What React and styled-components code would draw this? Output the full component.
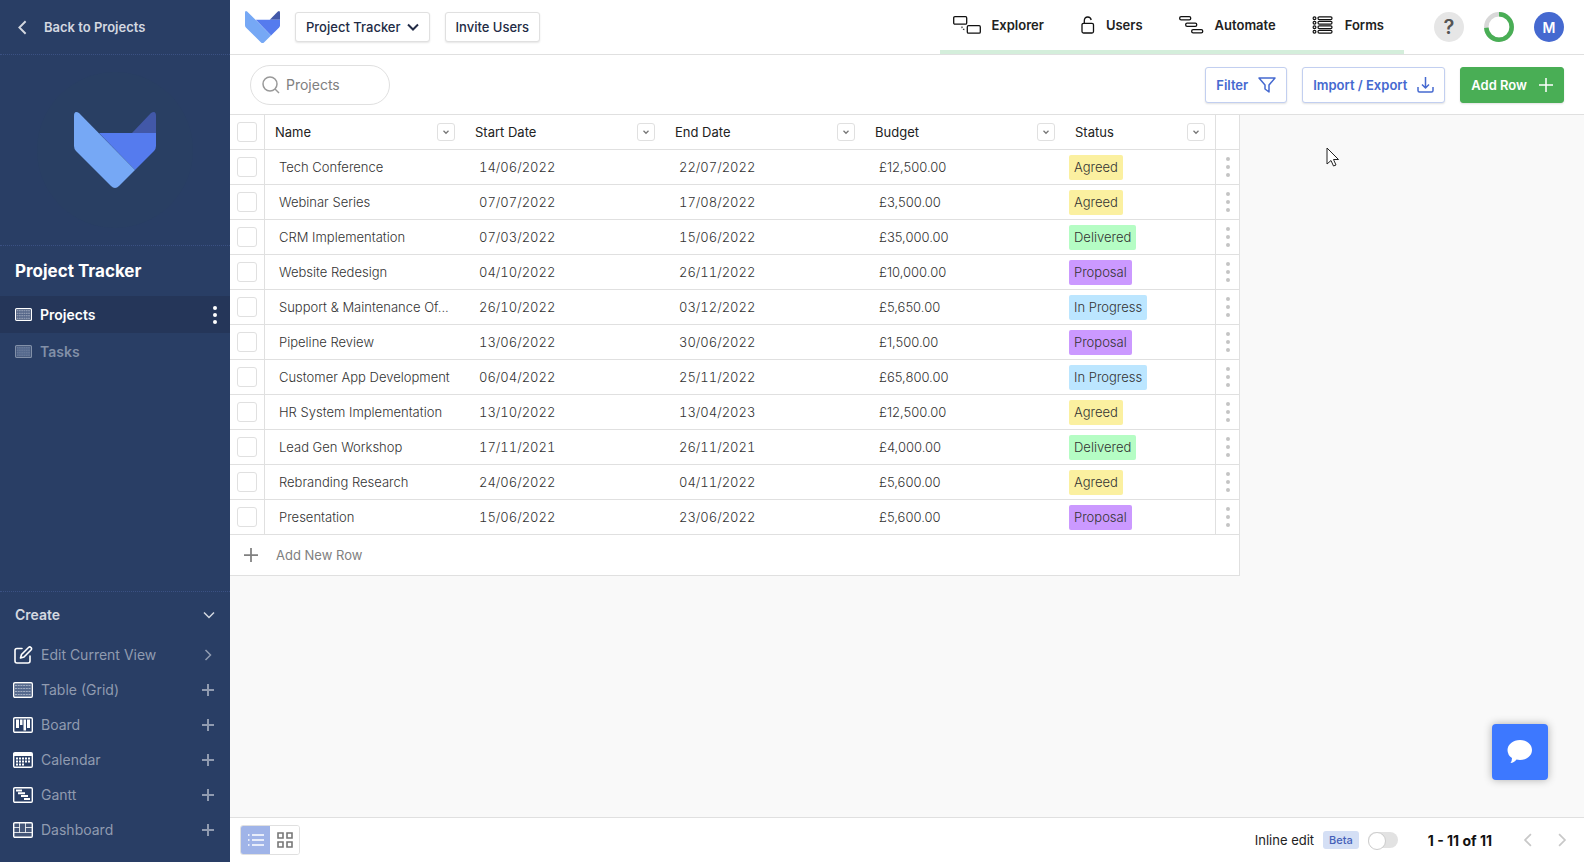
import { useState } from "react";
import styled, { createGlobalStyle } from "styled-components";

const GlobalStyle = createGlobalStyle`
  *{
    box-sizing: border-box;
  }
  body{
    margin: 0;
    font-family: Inter, "Liberation Sans", sans-serif;
    font-size: 13px;
    color: #222;
  }
  button, input{
    font-family: inherit;
    font-size: inherit;
  }
  button{
    cursor: pointer;
    padding: 0;
    border: 0;
    background: none;
    color: inherit;
  }
  a{
    color: inherit;
    text-decoration: none;
  }
  svg{
    display: block;
    flex-shrink: 0;
  }
`

const Page = styled.div`
  display: flex;
  min-height: 100vh;
`

/* sidebar */

const Sidebar = styled.aside`
  width: 230px;
  flex-shrink: 0;
  display: flex;
  flex-direction: column;
  background: #293e65;
  color: #fff;
`
const BackLink = styled.a`
  display: flex;
  align-items: center;
  gap: 14px;
  height: 55px;
  padding: 0 15px;
  border-bottom: 1px dotted #3b5183;
  font-weight: 600;
  color: #d4d8e0;
`
const Brand = styled.div`
  display: flex;
  align-items: center;
  justify-content: center;
  height: 191px;
  border-bottom: 1px dotted #3b5183;
`
const BrandCircle = styled.div`
  width: 156px;
  height: 156px;
  border-radius: 50%;
  background: #293f63;
  display: flex;
  align-items: center;
  justify-content: center;
`
const AppTitle = styled.h1`
  margin: 0;
  padding: 0 15px;
  font-size: 17px;
  font-weight: 700;
  line-height: 50px;
`
const Views = styled.nav`
  flex: 1;
`
const ViewRow = styled.div`
  display: flex;
  align-items: center;
  justify-content: space-between;
  height: 37px;
  padding: 0 12px 0 15px;
  font-size: 14px;
  font-weight: 600;
  background: ${p => p.$active ? "#253659" : "transparent"};
  color: ${p => p.$active ? "#fff" : "#8290a8"};
  a{
    display: flex;
    align-items: center;
    gap: 8px;
  }
`
const Create = styled.section`
  border-top: 1px dotted #3b5183;
  padding-bottom: 15px;
`
const CreateHead = styled.button`
  display: flex;
  width: 100%;
  align-items: center;
  justify-content: space-between;
  height: 45px;
  padding: 0 15px;
  font-size: 14px;
  font-weight: 600;
  color: #d4d8e0;
`
const CreateItem = styled.button`
  display: flex;
  width: 100%;
  align-items: center;
  height: 35px;
  padding: 0 16px 0 13px;
  font-size: 14px;
  color: #909bb0;
  span{
    flex: 1;
    text-align: left;
    padding-left: 8px;
  }
`

/* top bar */

const Main = styled.main`
  flex: 1;
  min-width: 0;
  display: flex;
  flex-direction: column;
  background: #f9f9f9;
`
const TopBar = styled.header`
  display: flex;
  align-items: center;
  height: 55px;
  padding: 0 20px 0 15px;
  background: #fff;
  border-bottom: 1px solid #e0e0e0;
`
const BoxButton = styled.button`
  display: flex;
  align-items: center;
  gap: 6px;
  height: 30px;
  margin-left: 15px;
  padding: 0 10px;
  border: 1px solid #e0e0e0;
  border-radius: 3px;
  box-shadow: 0 1px 2px rgba(0,0,0,0.1);
  background: #fff;
  font-weight: 500;
  color: #222b45;
`
const TopNav = styled.nav`
  display: flex;
  align-items: center;
  align-self: stretch;
  gap: 36px;
  margin-left: auto;
  padding: 0 20px 0 13px;
  border-bottom: 4px solid #d4eedb;
  font-weight: 600;
  a{
    display: flex;
    align-items: center;
    gap: 10px;
  }
`
const Round = styled.button`
  width: 30px;
  height: 30px;
  margin-left: ${p => p.$first ? "30px" : "20px"};
  border-radius: 50%;
  background: ${p => p.$bg || "none"};
  color: ${p => p.$color || "#fff"};
  font-size: ${p => p.$size || "14px"};
  font-weight: 600;
`

/* toolbar over the table */

const Toolbar = styled.div`
  display: flex;
  align-items: center;
  gap: 15px;
  height: 60px;
  padding: 0 20px;
  background: #fff;
  border-bottom: 1px solid #e0e0e0;
`
const Search = styled.label`
  display: flex;
  align-items: center;
  gap: 6px;
  width: 140px;
  height: 40px;
  margin-right: auto;
  padding: 0 11px;
  border: 1px solid #e0e0e0;
  border-radius: 20px;
  input{
    width: 80px;
    padding: 0;
    border: 0;
    outline: 0;
    font-size: 14px;
    background: none;
  }
  input::placeholder{
    color: #808080;
  }
`
const Action = styled.button`
  display: flex;
  align-items: center;
  gap: ${p => p.$primary ? "12px" : "10px"};
  height: 36px;
  padding: 0 10px;
  border: 1px solid ${p => p.$primary ? "#49ae55" : "#c2cff0"};
  border-radius: 3px;
  background: ${p => p.$primary ? "#49ae55" : "#fff"};
  color: ${p => p.$primary ? "#fff" : "#4569d0"};
  box-shadow: 0 1px 2px rgba(0,0,0,0.12);
  font-weight: 600;
`

/* table */

const Content = styled.div`
  flex: 1;
`
const Table = styled.table`
  width: 1010px;
  table-layout: fixed;
  border-collapse: separate;
  border-spacing: 0;
  background: #fff;
  border-right: 1px solid #e0e0e0;
  th, td{
    height: 35px;
    padding: 0 10px;
    border-bottom: 1px solid #e0e0e0;
    text-align: left;
    font-weight: 400;
  }
  td{
    padding: 0 4px 0 14px;
    color: #333;
    font-weight: 300;
    white-space: nowrap;
  }
  th:first-child, tbody td:first-child{
    padding: 0 7px;
    border-right: 1px solid #e0e0e0;
  }
  th:last-child, tbody td:last-child{
    padding: 0 9px;
    border-left: 1px solid #e0e0e0;
  }
  tfoot td{
    height: 41px;
    padding: 0 14px;
  }
`
const DateCell = styled.td`
  font-variant-numeric: tabular-nums;
`
const StatusCell = styled.td`
  &&{
    padding: 0 4px;
  }
`
const Check = styled.input`
  display: block;
  appearance: none;
  width: 20px;
  height: 20px;
  margin: 0;
  border: 1px solid #e0e0e0;
  border-radius: 3px;
  background: #fff;
  &:checked{
    background: #4569d0;
  }
`
const HeadCell = styled.div`
  display: flex;
  align-items: center;
  justify-content: space-between;
`
const HeadMenu = styled.button`
  display: flex;
  align-items: center;
  justify-content: center;
  width: 18px;
  height: 18px;
  border: 1px solid #e0e0e0;
  border-radius: 3px;
  color: #777;
`
const Tag = styled.span`
  display: inline-block;
  padding: 0 5px;
  border-radius: 2px;
  line-height: 25px;
  vertical-align: middle;
  background: ${p => p.$color};
`
const RowMenu = styled.button`
  display: block;
`
const AddNew = styled.button`
  display: flex;
  align-items: center;
  gap: 18px;
  color: #808080;
`

/* footer */

const Footer = styled.footer`
  display: flex;
  align-items: center;
  height: 45px;
  padding: 0 12px 0 10px;
  background: #fff;
  border-top: 1px solid #e0e0e0;
`
const Modes = styled.div`
  display: flex;
  margin-right: auto;
  border: 1px solid #e0e0e0;
  border-radius: 3px;
  overflow: hidden;
`
const Mode = styled.button`
  display: flex;
  align-items: center;
  justify-content: center;
  width: 29px;
  height: 28px;
  background: ${p => p.$active ? "#a0b4e8" : "#fff"};
  color: ${p => p.$active ? "#fff" : "#777"};
`
const InlineEdit = styled.label`
  display: flex;
  align-items: center;
  gap: 9px;
`
const Beta = styled.span`
  padding: 0 6px;
  border-radius: 3px;
  background: #d4dff5;
  color: #4560b8;
  font-size: 11px;
  font-weight: 500;
  line-height: 18px;
`
const Switch = styled.input`
  appearance: none;
  display: flex;
  width: 30px;
  height: 16px;
  margin: 0;
  border-radius: 8px;
  background: #e2e2e2;
  &::before{
    content: "";
    width: 16px;
    height: 16px;
    border: 1px solid #ccc;
    border-radius: 50%;
    background: #fff;
  }
  &:checked{
    justify-content: flex-end;
    background: #49ae55;
  }
`
const Count = styled.span`
  margin: 0 26px 0 30px;
  font-size: 14px;
  font-weight: 700;
  color: #111;
`
const PageButton = styled.button`
  display: flex;
  justify-content: center;
  width: 20px;
  color: #c8c8c8;
  & + &{
    margin-left: 14px;
  }
`
const Chat = styled.button`
  position: fixed;
  right: 36px;
  bottom: 82px;
  display: flex;
  align-items: center;
  justify-content: center;
  width: 56px;
  height: 56px;
  border-radius: 4px;
  background: #3d78ff;
  box-shadow: 0 0 8px rgba(0,0,0,0.3);
`
const Pointer = styled.svg`
  position: fixed;
  left: 1326px;
  top: 147px;
  pointer-events: none;
`

function Logo({ width, height }){
    return <svg width={width} height={height} viewBox="0 0 82 76" preserveAspectRatio="none" aria-hidden="true">
        <path d="M58 21L77 1Q82 -2 82 4V21Z" fill="#4258a8" />
        <path d="M25 21H82V34Q82 37 80 39L61 58Z" fill="#557bee" />
        <path d="M0 4Q0 -2 5 1L61 58L45 74Q41 78 37 74L2 39Q0 37 0 34Z" fill="#76a8f5" />
    </svg>
}

function Chevron({ dir = "down", size = 12, stroke = 1.5 }){
    const paths = {
        down: "M1 3.5L6 8.5L11 3.5",
        left: "M8.5 1L3.5 6L8.5 11",
        right: "M3.5 1L8.5 6L3.5 11",
    }
    return <svg width={size} height={size} viewBox="0 0 12 12" fill="none" stroke="currentColor" strokeWidth={stroke} aria-hidden="true">
        <path d={paths[dir]} />
    </svg>
}

function Plus({ size = 12, stroke = 2 }){
    return <svg width={size} height={size} viewBox="0 0 12 12" stroke="currentColor" strokeWidth={stroke} aria-hidden="true">
        <path d="M6 0V12M0 6H12" />
    </svg>
}

function Dots({ color, r = 2, gap = 7 }){
    return <svg width="6" height={gap * 2 + 6} fill={color} aria-hidden="true">
        <circle cx="3" cy="3" r={r} />
        <circle cx="3" cy={3 + gap} r={r} />
        <circle cx="3" cy={3 + gap * 2} r={r} />
    </svg>
}

function GridIcon({ width = 17, height = 13, color = "currentColor" }){
    return <svg width={width} height={height} viewBox="0 0 20 16" preserveAspectRatio="none" fill="none" stroke={color} aria-hidden="true">
        <rect x=".7" y=".7" width="18.6" height="14.6" rx="1.2" strokeWidth="1.4" />
        <rect x="2" y="2" width="16" height="12" fill="#8fa0c0" fillOpacity=".45" stroke="none" />
        <path d="M2 3.5H18M2 6.5H18M2 9.500H18M2 12.500H18" strokeWidth="1.2" strokeDasharray="2 .7" opacity=".45" />
    </svg>
}

function CreateIcon({ type }){
    if(type === "edit"){
        return <svg width="20" height="18" viewBox="0 0 20 18" fill="none" stroke="#fff" strokeWidth="1.6" strokeLinejoin="round" strokeLinecap="round" aria-hidden="true">
            <path d="M9 2.5H4Q2 2.5 2 4.500V15Q2 17 4 17H15Q17 17 17 15V10" />
            <path d="M15.500 1.500Q16.800 .4 18 1.500Q19.100 2.700 18 4L11 11L7.500 12L8.500 8.500Z" />
        </svg>
    }
    if(type === "grid"){
        return <GridIcon width={20} height={16} color="#fff" />
    }
    return <svg width="20" height="16" viewBox="0 0 20 16" fill="none" stroke="#fff" aria-hidden="true">
        <rect x=".7" y=".7" width="18.600" height="14.600" rx="1.2" strokeWidth="1.4" />
        {type === "board" && <path d="M3 2.500H6V11H3ZM7 2.500H9.500V8H7ZM10.500 2.500H13V13.500H10.500ZM14 2.500H17V11H14Z" fill="#fff" stroke="none" />}
        {type === "calendar" && <>
            <path d="M1 1H19V4H1Z" fill="#fff" stroke="none" />
            <path d="M3 6.500H17.500M3 9.500H17.500M3 12.500H12" strokeWidth="2" strokeDasharray="2 1" />
        </>}
        {type === "gantt" && <path d="M3 3.500H9M5 6.200H12M8 9H15M11 12H17" strokeWidth="2" />}
        {type === "dashboard" && <>
            <rect x="1" y="1" width="18" height="14" fill="#fff" fillOpacity=".12" stroke="none" />
            <path d="M1 5.500H6.500M6.500 1V10.500M12.500 1V10.500M12.500 5.500H19M1 10.500H19" opacity=".8" />
        </>}
    </svg>
}

function NavIcon({ type }){
    const common = { fill: "none", stroke: "#111", strokeWidth: 1.3, "aria-hidden": true }
    if(type === "explorer"){
        return <svg width="28" height="18" viewBox="0 0 28 18" {...common}>
            <rect x=".7" y=".7" width="13" height="7.500" rx="1.200" />
            <rect x="14.300" y="9.700" width="13" height="7.500" rx="1.200" />
            <path d="M9 10.500V11.500Q9 13.500 12 13.500" strokeDasharray="1.500 1.500" opacity=".8" />
        </svg>
    }
    if(type === "users"){
        return <svg width="16" height="18" viewBox="0 0 16 18" {...common}>
            <rect x="2" y="7.300" width="11.500" height="9.700" rx="1.500" />
            <path d="M4.300 7.300V4.800Q4.300 1 7.800 1Q10.600 1 11.200 4" />
        </svg>
    }
    if(type === "automate"){
        return <svg width="26" height="18" viewBox="0 0 26 18" {...common}>
            <rect x=".7" y=".7" width="11" height="3.200" rx="1.400" />
            <rect x="6.700" y="7.200" width="11" height="3.200" rx="1.400" />
            <rect x="12.700" y="13.700" width="11" height="3.200" rx="1.400" />
        </svg>
    }
    return <svg width="23" height="18" viewBox="0 0 23 18" {...common} strokeWidth="1.2">
        {[2.200, 6.700, 11.200, 15.700].map(y => <g key={y}>
            <circle cx="2.500" cy={y} r="1.400" />
            <rect x="6" y={y - 1.400} width="14" height="2.800" rx="1.300" />
        </g>)}
    </svg>
}

const createItems = [
    { type: "grid", label: "Table (Grid)" },
    { type: "board", label: "Board" },
    { type: "calendar", label: "Calendar" },
    { type: "gantt", label: "Gantt" },
    { type: "dashboard", label: "Dashboard" },
]

const navItems = [
    { type: "explorer", label: "Explorer" },
    { type: "users", label: "Users" },
    { type: "automate", label: "Automate" },
    { type: "forms", label: "Forms" },
]

const columns = ["Name", "Start Date", "End Date", "Budget", "Status"]

const statusColors = {
    "Agreed": "#fbf0a0",
    "Delivered": "#b5fdc4",
    "Proposal": "#cb99ff",
    "In Progress": "#bce6ff",
}

const rows = [
    ["Tech Conference", "14/06/2022", "22/07/2022", "£12,500.00", "Agreed"],
    ["Webinar Series", "07/07/2022", "17/08/2022", "£3,500.00", "Agreed"],
    ["CRM Implementation", "07/03/2022", "15/06/2022", "£35,000.00", "Delivered"],
    ["Website Redesign", "04/10/2022", "26/11/2022", "£10,000.00", "Proposal"],
    ["Support & Maintenance Of...", "26/10/2022", "03/12/2022", "£5,650.00", "In Progress"],
    ["Pipeline Review", "13/06/2022", "30/06/2022", "£1,500.00", "Proposal"],
    ["Customer App Development", "06/04/2022", "25/11/2022", "£65,800.00", "In Progress"],
    ["HR System Implementation", "13/10/2022", "13/04/2023", "£12,500.00", "Agreed"],
    ["Lead Gen Workshop", "17/11/2021", "26/11/2021", "£4,000.00", "Delivered"],
    ["Rebranding Research", "24/06/2022", "04/11/2022", "£5,600.00", "Agreed"],
    ["Presentation", "15/06/2022", "23/06/2022", "£5,600.00", "Proposal"],
]

function SideMenu(){
    return <Sidebar>
        <BackLink href="#projects">
            <Chevron dir="left" size={15} />
            Back to Projects
        </BackLink>
        <Brand>
            <BrandCircle><Logo width={82} height={76} /></BrandCircle>
        </Brand>
        <AppTitle>Project Tracker</AppTitle>
        <Views>
            <ViewRow $active>
                <a href="#projects"><GridIcon />Projects</a>
                <button aria-label="View options"><Dots color="#fff" /></button>
            </ViewRow>
            <ViewRow>
                <a href="#tasks"><GridIcon />Tasks</a>
            </ViewRow>
        </Views>
        <Create>
            <CreateHead>Create<Chevron /></CreateHead>
            <CreateItem>
                <CreateIcon type="edit" />
                <span>Edit Current View</span>
                <Chevron dir="right" />
            </CreateItem>
            {createItems.map(item => <CreateItem key={item.type}>
                <CreateIcon type={item.type} />
                <span>{item.label}</span>
                <Plus />
            </CreateItem>)}
        </Create>
    </Sidebar>
}

function Header(){
    return <TopBar>
        <Logo width={35} height={32} />
        <BoxButton>Project Tracker<Chevron stroke={2} /></BoxButton>
        <BoxButton>Invite Users</BoxButton>
        <TopNav>
            {navItems.map(item => <a key={item.type} href={`#${item.type}`}>
                <NavIcon type={item.type} />
                {item.label}
            </a>)}
        </TopNav>
        <Round $first $bg="#e6e6e6" $color="#555" $size="20px">?</Round>
        <Round aria-label="Progress">
            <svg width="30" height="30" viewBox="0 0 30 30" fill="none" strokeWidth="4.5">
                <circle cx="15" cy="15" r="12.700" stroke="#d8d8d8" />
                <circle cx="15" cy="15" r="12.700" stroke="#49ae55" pathLength="100" strokeDasharray="74 26" transform="rotate(-90 15 15)" />
            </svg>
        </Round>
        <Round $bg="#4569d0">M</Round>
    </TopBar>
}

function ProjectTable(){
    return <Table>
        <colgroup>
            <col style={{ width: 35 }} />
            <col style={{ width: 200 }} />
            <col style={{ width: 200 }} />
            <col style={{ width: 200 }} />
            <col style={{ width: 200 }} />
            <col />
            <col style={{ width: 24 }} />
        </colgroup>
        <thead>
            <tr>
                <th><Check type="checkbox" aria-label="Select all rows" /></th>
                {columns.map(name => <th key={name}>
                    <HeadCell>
                        {name}
                        <HeadMenu aria-label={`${name} menu`}><Chevron size={6} stroke={2.5} /></HeadMenu>
                    </HeadCell>
                </th>)}
                <th></th>
            </tr>
        </thead>
        <tbody>
            {rows.map(([name, start, end, budget, status]) => <tr key={name}>
                <td><Check type="checkbox" aria-label={`Select ${name}`} /></td>
                <td>{name}</td>
                <DateCell>{start}</DateCell>
                <DateCell>{end}</DateCell>
                <td>{budget}</td>
                <StatusCell><Tag $color={statusColors[status]}>{status}</Tag></StatusCell>
                <td><RowMenu aria-label={`${name} options`}><Dots color="#c4c4c4" gap={8} /></RowMenu></td>
            </tr>)}
        </tbody>
        <tfoot>
            <tr>
                <td colSpan="7"><AddNew><Plus size={14} stroke={1.5} />Add New Row</AddNew></td>
            </tr>
        </tfoot>
    </Table>
}

export default function App(){
    const [inline, setInline] = useState(false)

    return <Page>
        <GlobalStyle />
        <SideMenu />
        <Main>
            <Header />
            <Toolbar>
                <Search>
                    <svg width="18" height="18" viewBox="0 0 18 18" fill="none" stroke="#999" strokeWidth="1.5" aria-hidden="true">
                        <circle cx="8" cy="8" r="7" />
                        <path d="M13 13L17 17" />
                    </svg>
                    <input type="text" placeholder="Projects" aria-label="Search projects" />
                </Search>
                <Action>
                    Filter
                    <svg width="18" height="16" viewBox="0 0 18 16" fill="none" stroke="currentColor" strokeWidth="1.5" strokeLinejoin="round" aria-hidden="true">
                        <path d="M1 1H17L11 8V15L7 12V8Z" />
                    </svg>
                </Action>
                <Action>
                    Import / Export
                    <svg width="17" height="16" viewBox="0 0 17 16" fill="none" stroke="currentColor" strokeWidth="1.5" strokeLinejoin="round" aria-hidden="true">
                        <path d="M8.500 0V11M5 7.500L8.500 11L12 7.500M1 10V13.500Q1 15 2.500 15H14.500Q16 15 16 13.500V10" />
                    </svg>
                </Action>
                <Action $primary>Add Row<Plus size={14} stroke={1.3} /></Action>
            </Toolbar>
            <Content>
                <ProjectTable />
            </Content>
            <Footer>
                <Modes>
                    <Mode $active aria-label="List view">
                        <svg width="16" height="14" viewBox="0 0 16 14" stroke="currentColor" strokeWidth="1.3" aria-hidden="true">
                            <path d="M0 2H1.500M4 2H16M0 7H1.500M4 7H16M0 12H1.500M4 12H16" />
                        </svg>
                    </Mode>
                    <Mode aria-label="Card view">
                        <svg width="16" height="16" viewBox="0 0 16 16" fill="none" stroke="currentColor" strokeWidth="1.6" aria-hidden="true">
                            <path d="M1 1H6V6H1ZM10 1H15V6H10ZM1 10H6V15H1ZM10 10H15V15H10Z" />
                        </svg>
                    </Mode>
                </Modes>
                <InlineEdit>
                    Inline edit
                    <Beta>Beta</Beta>
                    <Switch type="checkbox" checked={inline} onChange={e => setInline(e.target.checked)} />
                </InlineEdit>
                <Count>1 - 11 of 11</Count>
                <PageButton aria-label="Previous page"><Chevron dir="left" size={14} /></PageButton>
                <PageButton aria-label="Next page"><Chevron dir="right" size={14} /></PageButton>
            </Footer>
        </Main>
        <Chat aria-label="Open chat">
            <svg width="26" height="24" viewBox="0 0 26 24" fill="#fff" aria-hidden="true">
                <path d="M13 0C20 0 25 4.500 25 10S20 20 13 20Q11 20 9.500 19.600Q7 23 3.500 23Q5 21 5 18Q0.500 15 .5 10C.5 4.500 6 0 13 0Z" />
            </svg>
        </Chat>
        <Pointer width="14" height="21" viewBox="0 0 14 21" fill="#fff" stroke="#222" aria-hidden="true">
            <path d="M1 1V17L5 13.500L7.500 19L10 18L7.500 12.500H12.500Z" />
        </Pointer>
    </Page>
}
